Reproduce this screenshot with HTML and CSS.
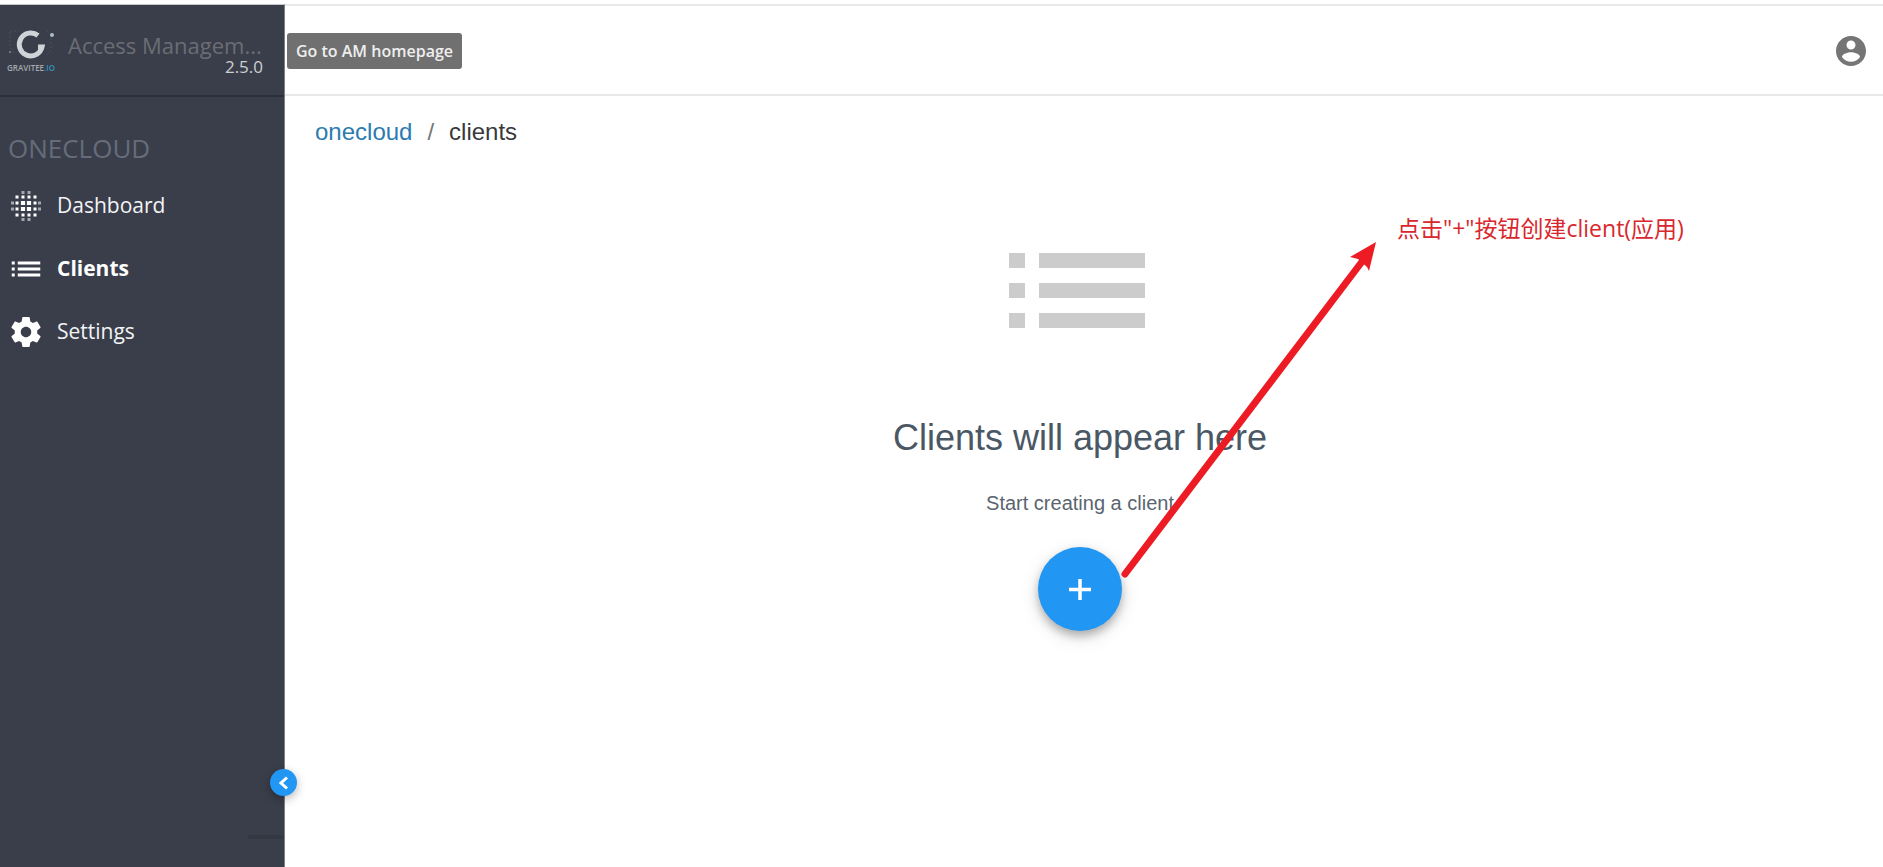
FILE: index.html
```html
<!DOCTYPE html>
<html lang="en">
<head>
<meta charset="utf-8">
<title>Access Management - Clients</title>
<link rel="stylesheet" href="styles.css">
</head>
<body>
<div class="app">
  <aside class="sidebar">
    <a class="brand" href="#">
      <svg class="brand-logo" viewBox="0 0 48 36" aria-hidden="true">
        <path d="M4 3h9M41 3l4 3M45 10v12l-5 6M4 4v14l5 9" fill="none" stroke="#42555e" stroke-width="1" stroke-dasharray="2 2"/>
        <path d="M32 7.500A11.500 11.500 0 1 0 36 19H32" fill="none" stroke="#cfd4d8" stroke-width="5"/>
        <circle cx="46" cy="7" r="2" fill="#aebfca"/>
        <circle cx="4" cy="24" r="1" fill="#6f8f98"/>
      </svg>
      <span class="brand-word">GRAVITEE<span class="brand-io">.IO</span></span>
      <span class="brand-name">Access Managem...</span>
      <span class="brand-version">2.5.0</span>
    </a>
    <h2 class="domain">ONECLOUD</h2>
    <nav class="nav">
      <a class="nav-item" href="#">
        <svg class="icon" viewBox="0 0 24 24" aria-hidden="true">
          <g fill="#fff">
            <path d="M8.600 8.600h2.800v2.800H8.600zM12.600 8.600h2.800v2.800h-2.800zM8.600 12.600h2.800v2.800H8.600zM12.600 12.600h2.800v2.800h-2.800z"/>
            <path d="M5 5h2v2H5zM9 5h2v2H9zM13 5h2v2h-2zM17 5h2v2h-2zM5 9h2v2H5zM17 9h2v2h-2zM5 13h2v2H5zM17 13h2v2h-2zM5 17h2v2H5zM9 17h2v2H9zM13 17h2v2h-2zM17 17h2v2h-2z"/>
            <path opacity=".55" d="M9 2h2v2H9zM13 2h2v2h-2zM9 20h2v2H9zM13 20h2v2h-2zM2 9h2v2H2zM2 13h2v2H2zM20 9h2v2h-2zM20 13h2v2h-2z"/>
          </g>
        </svg>
        <span>Dashboard</span>
      </a>
      <a class="nav-item nav-active" href="#">
        <svg class="icon" viewBox="0 0 24 24" aria-hidden="true"><path fill="#fff" d="M2.500 13h2v-2h-2v2zm0 4h2v-2h-2v2zm0-8h2V7h-2v2zm4 4h15v-2h-15v2zm0 4h15v-2h-15v2zM6.500 7v2h15V7h-15z"/></svg>
        <span>Clients</span>
      </a>
      <a class="nav-item" href="#">
        <svg class="icon" viewBox="0 0 24 24" aria-hidden="true"><path fill="#fff" d="M19.430 12.980c.04-.32.07-.64.07-.98s-.03-.66-.07-.98l2.110-1.650c.19-.15.24-.42.12-.64l-2-3.460c-.12-.22-.39-.3-.61-.22l-2.490 1c-.52-.4-1.080-.73-1.690-.98l-.38-2.650C14.460 2.180 14.250 2 14 2h-4c-.25 0-.46.18-.49.42l-.38 2.650c-.61.25-1.170.59-1.690.98l-2.490-1c-.23-.09-.49 0-.61.22l-2 3.460c-.13.22-.07.49.12.64l2.110 1.650c-.04.32-.07.65-.07.98s.03.66.07.98l-2.110 1.650c-.19.15-.24.42-.12.64l2 3.460c.12.22.39.3.61.22l2.490-1c.52.4 1.080.73 1.690.98l.38 2.650c.03.24.24.42.49.42h4c.25 0 .46-.18.49-.42l.38-2.650c.61-.25 1.170-.59 1.690-.98l2.490 1c.23.09.49 0 .61-.22l2-3.460c.12-.22.07-.49-.12-.64l-2.110-1.650zM12 15.500c-1.930 0-3.500-1.570-3.500-3.500s1.570-3.500 3.500-3.500 3.500 1.570 3.500 3.500-1.570 3.500-3.500 3.500z"/></svg>
        <span>Settings</span>
      </a>
    </nav>
    <div class="sidebar-rule"></div>
    <button class="collapse" type="button" aria-label="Collapse menu">
      <svg viewBox="0 0 27 27" aria-hidden="true"><path d="M17 8.500l-6 5.500 6 5.500" fill="none" stroke="#fff" stroke-width="3"/></svg>
    </button>
  </aside>

  <div class="page">
    <header class="topbar">
      <div class="tooltip" role="tooltip">Go to AM homepage</div>
      <button class="account" type="button" aria-label="Account">
        <svg class="icon" viewBox="0 0 24 24" aria-hidden="true"><path fill="#757575" d="M12 2C6.480 2 2 6.480 2 12s4.480 10 10 10 10-4.480 10-10S17.520 2 12 2zm0 3c1.660 0 3 1.340 3 3s-1.340 3-3 3-3-1.340-3-3 1.340-3 3-3zm0 14.200c-2.500 0-4.710-1.280-6-3.220.03-1.990 4-3.080 6-3.080 1.990 0 5.970 1.090 6 3.080-1.290 1.940-3.500 3.220-6 3.220z"/></svg>
      </button>
    </header>
    <main class="content">
      <nav class="crumbs" aria-label="Breadcrumb">
        <a href="#">onecloud</a><span class="crumb-sep">/</span><span>clients</span>
      </nav>
      <section class="empty">
        <svg class="empty-icon" viewBox="0 0 142 75" aria-hidden="true"><path fill="#ccc" d="M0 0h16v15H0zM30 0h106v15H30zM0 30h16v15H0zM30 30h106v15H30zM0 60h16v15H0zM30 60h106v15H30z"/></svg>
        <h1 class="empty-title">Clients will appear here</h1>
        <p class="empty-text">Start creating a client</p>
        <div class="create">
          <button class="fab" type="button" aria-label="Create client">
            <svg viewBox="0 0 24 24" aria-hidden="true"><path d="M12 2v21M1 12.500h22" fill="none" stroke="#fff" stroke-width="3.500"/></svg>
          </button>
          <svg class="arrow" viewBox="0 0 266 344" aria-hidden="true">
            <path d="M7 336L246 21" fill="none" stroke="#ed1c24" stroke-width="7" stroke-linecap="round"/>
            <path d="M258 4L232 19l8 2 9 8 2 4z" fill="#ed1c24"/>
          </svg>
          <p class="note" lang="zh">点击"+"按钮创建client(应用)</p>
        </div>
      </section>
    </main>
  </div>
</div>
</body>
</html>
```
FILE: styles.css
```css
* { box-sizing: border-box; }

body {
  margin: 0;
  background: #fff;
  font-family: "Liberation Sans", Arial, sans-serif;
}

h1, h2, p { margin: 0; font-weight: 400; }
a { text-decoration: none; }

button {
  display: grid;
  place-items: center;
  padding: 0;
  border: 0;
  background: none;
  cursor: pointer;
}

.app {
  display: grid;
  grid-template-columns: 285px 1fr;
  min-height: 100vh;
  border-top: 4px solid #fff;
}

.icon { width: 36px; height: 36px; flex: none; }

.sidebar {
  position: relative;
  display: flex;
  flex-direction: column;
  border-top: 1px solid #c4c6ca;
  border-right: 1px solid #7d8088;
  background: #3a3e4a;
  color: #f2f3f5;
  font-family: "Open Sans", "Noto Sans", sans-serif;
}

.brand {
  display: grid;
  grid-template-columns: 56px 1fr;
  grid-template-rows: 29px 20px;
  column-gap: 12px;
  height: 92px;
  padding: 23px 21px 0 0;
  border-bottom: 2px solid #2b2e38;
}

.brand-logo {
  grid-area: 1 / 1 / 3 / 2;
  width: 48px;
  height: 36px;
  margin-left: 6px;
}

.brand-word {
  grid-area: 2 / 1;
  align-self: end;
  padding: 0 0 3px 7px;
  color: #a4a9b0;
  font-size: 8px;
  font-weight: 600;
  line-height: 12px;
}

.brand-io { color: #2f93bd; }

.brand-name {
  grid-area: 1 / 2;
  align-self: end;
  color: #6b6d74;
  font-size: 22px;
  line-height: 24px;
  white-space: nowrap;
}

.brand-version {
  grid-area: 2 / 2;
  justify-self: end;
  color: #cdcfd2;
  font-size: 17px;
  line-height: 20px;
}

.domain {
  padding: 33px 8px 0;
  color: #646d79;
  font-size: 26px;
  line-height: 36px;
}

.nav {
  display: flex;
  flex-direction: column;
  gap: 27px;
  padding: 22px 8px;
}

.nav-item {
  display: flex;
  align-items: center;
  gap: 13px;
  height: 36px;
  color: #f2f3f5;
  font-size: 21px;
}

.nav-item span { padding-bottom: 3px; }
.nav-active { color: #fff; font-weight: 700; }

.sidebar-rule {
  width: 36px;
  margin: auto 0 28px auto;
  border-top: 4px solid #343843;
}

.collapse {
  position: absolute;
  right: -13px;
  bottom: 71px;
  width: 27px;
  height: 27px;
  border-radius: 50%;
  background: #2196f3;
  box-shadow: 0 3px 10px rgba(0, 0, 0, .3);
}

.collapse svg { width: 27px; height: 27px; }

.page { display: flex; flex-direction: column; border-top: 2px solid #e8eaea; }

.topbar {
  display: flex;
  align-items: center;
  justify-content: space-between;
  height: 90px;
  padding: 2px 14px 0 2px;
  border-bottom: 2px solid #e6e8ea;
}

.tooltip {
  padding: 0 9px;
  border-radius: 3px;
  background: #707070;
  color: #eee;
  font-family: "Open Sans", "Noto Sans", sans-serif;
  font-size: 16px;
  font-weight: 600;
  line-height: 36px;
}

.content { padding: 20px 8px 0 0; }

.crumbs {
  display: flex;
  gap: 15px;
  padding-left: 30px;
  color: #37393d;
  font-size: 24px;
  line-height: 32px;
}

.crumbs a { color: #2b7bb0; }
.crumb-sep { color: #777; }

.empty {
  display: flex;
  flex-direction: column;
  align-items: center;
  padding-top: 105px;
  color: #4a5866;
}

.empty-icon { width: 142px; height: 75px; }
.empty-title { margin-top: 88px; font-size: 36px; line-height: 44px; }
.empty-text { margin-top: 29px; color: #5a6470; font-size: 20px; line-height: 28px; }

.create { position: relative; margin-top: 30px; }

.fab {
  width: 84px;
  height: 84px;
  border-radius: 50%;
  background: #2196f3;
  box-shadow: 0 5px 8px rgba(0, 0, 0, .25), 0 6px 20px rgba(0, 0, 0, .12);
}

.fab svg { width: 24px; height: 24px; }

.arrow {
  position: absolute;
  left: 80px;
  bottom: 49px;
  width: 266px;
  height: 344px;
  pointer-events: none;
}

.note {
  position: absolute;
  left: 359px;
  bottom: 387px;
  color: #d9272e;
  font-family: "Open Sans", "Noto Sans CJK SC", sans-serif;
  font-size: 23px;
  line-height: 32px;
  white-space: nowrap;
}
```
